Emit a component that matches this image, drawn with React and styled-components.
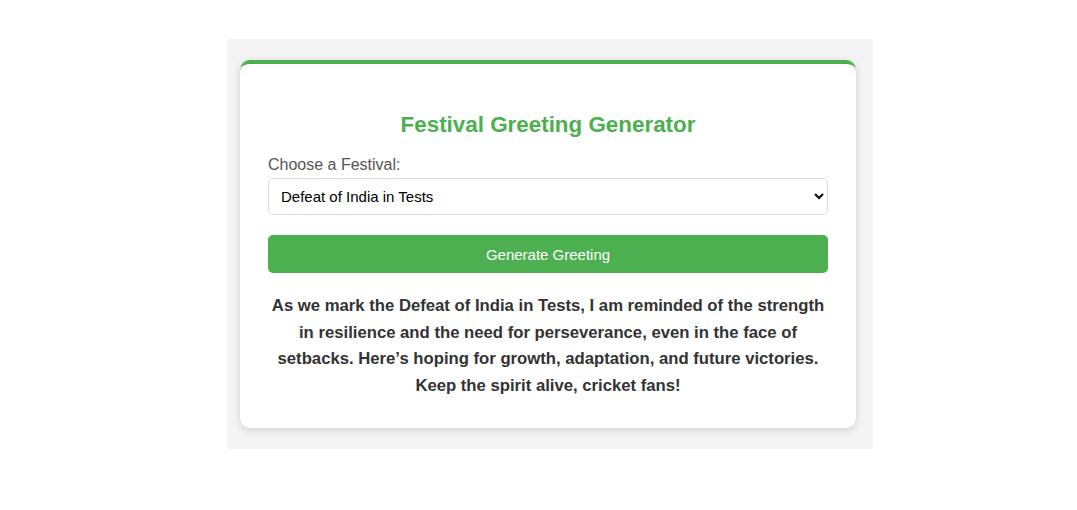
import React, { useState } from 'react'
import styled, { createGlobalStyle } from 'styled-components'

const GlobalStyle = createGlobalStyle`
  body {
    margin: 0;
    background: #fff;
    font-family: "Liberation Sans", Arial, sans-serif;
  }
`

const Page = styled.div`
  display: flex;
  padding: 39px 0 0 227px;
`

const Backdrop = styled.div`
  width: 646px;
  box-sizing: border-box;
  padding: 21px 17px 21px 13px;
  background: #f4f4f4;
`

const Card = styled.div`
  background: #fff;
  border-top: 4px solid #4caf50;
  border-radius: 10px;
  box-shadow: 0 2px 8px rgba(0, 0, 0, 0.15);
  padding: 48px 28px 28px;
  display: flex;
  flex-direction: column;
`

const Title = styled.h1`
  margin: 0 0 18px;
  text-align: center;
  color: #4caf50;
  font-size: 22.4px;
  font-weight: bold;
`

const Label = styled.label`
  color: #555;
  font-size: 16px;
  margin-bottom: 4px;
`

const Select = styled.select`
  height: 37px;
  border: 1px solid #ddd;
  border-radius: 5px;
  padding: 0 8px;
  font-family: "Liberation Sans", Arial, sans-serif;
  font-size: 15px;
  color: #000;
  background: #fff;
  margin-bottom: 20px;
`

const Button = styled.button`
  height: 38px;
  border: none;
  border-radius: 5px;
  background: #4caf50;
  color: #fff;
  font-family: "Liberation Sans", Arial, sans-serif;
  font-size: 15px;
  cursor: pointer;
`

const Greeting = styled.p`
  margin: 20px 0 0;
  text-align: center;
  color: #333;
  font-size: 16.7px;
  font-weight: bold;
  line-height: 26.7px;
`

const festivals = ['Defeat of India in Tests', 'Diwali', 'Holi', 'Eid', 'Christmas']

function App() {
  const [festival, setFestival] = useState(festivals[0])
  return (
    <>
      <GlobalStyle />
      <Page>
        <Backdrop>
          <Card>
            <Title>Festival Greeting Generator</Title>
            <Label>Choose a Festival:</Label>
            <Select value={festival} onChange={e => setFestival(e.target.value)}>
              {festivals.map(f => (
                <option key={f} value={f}>{f}</option>
              ))}
            </Select>
            <Button>Generate Greeting</Button>
            <Greeting>
              As we mark the Defeat of India in Tests, I am reminded of the strength in resilience and the need for perseverance, even in the face of setbacks. Here’s hoping for growth, adaptation, and future victories. Keep the spirit alive, cricket fans!
            </Greeting>
          </Card>
        </Backdrop>
      </Page>
    </>
  )
}

export default App
